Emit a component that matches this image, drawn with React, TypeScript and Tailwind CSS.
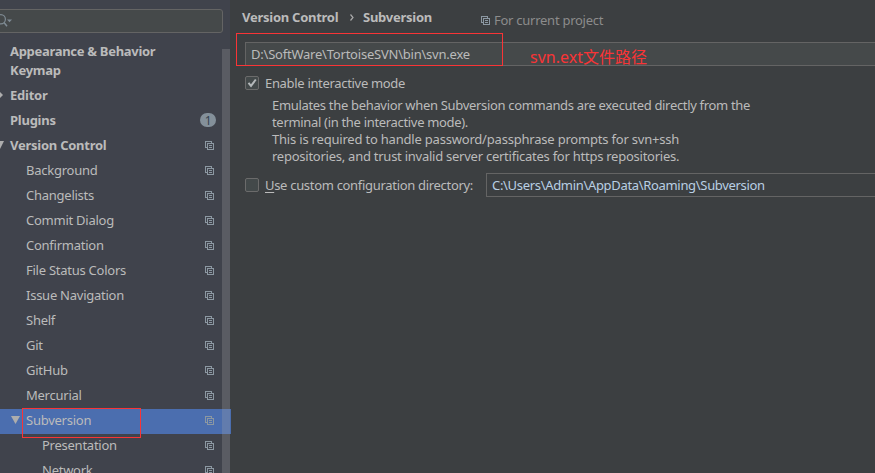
import React from "react";

function CopyIcon({ className = "" }: { className?: string }) {
  return (
    <svg width="9" height="9" viewBox="0 0 9 9" fill="none" stroke="#8c98a2" shapeRendering="crispEdges" className={`shrink-0 ${className}`}>
      <path d="M2 6.5H0.5V0.5H6.5V2" />
      <rect x="2.5" y="2.5" width="6" height="6" />
      <path d="M4 4.5H7M4 6.5H7" />
    </svg>
  );
}

const children = [
  "Background",
  "Changelists",
  "Commit Dialog",
  "Confirmation",
  "File Status Colors",
  "Issue Navigation",
  "Shelf",
  "Git",
  "GitHub",
  "Mercurial",
];

function Row({ label, indent = "pl-[26px]" }: { label: string; indent?: string }) {
  return (
    <div className={`flex h-[25px] shrink-0 items-start pr-[16px] ${indent}`}>
      <span className="mt-[3px] flex-1">{label}</span>
      <CopyIcon className="mt-[7px]" />
    </div>
  );
}

function Sidebar() {
  return (
    <aside className="relative z-10 flex h-full w-[230px] shrink-0 flex-col bg-[#40434c] tracking-[-0.25px]">
      <div className="-ml-[6px] mt-[9px] flex h-[24px] w-[229px] shrink-0 items-center rounded-[3px] border border-[#646464] bg-[#45494a]">
        <svg width="20" height="14" viewBox="0 0 20 14" fill="none" className="ml-px">
          <circle cx="4.8" cy="5.3" r="4.6" stroke="#7f8b94" strokeWidth="1.2" />
          <path d="M8 8.6L11 12.2" stroke="#7f8b94" strokeWidth="1.5" />
          <path d="M11 5.5H16L13.5 8.3Z" fill="#7f8b94" />
        </svg>
      </div>
      <nav className="flex min-h-0 flex-1 flex-col pt-[8px]">
        <div className="flex h-[20px] shrink-0 items-center pl-[10px] font-bold tracking-[-0.3px]">Appearance &amp; Behavior</div>
        <div className="flex h-[23px] shrink-0 items-start pl-[10px] pt-px font-bold">Keymap</div>
        <div className="relative flex h-[25px] shrink-0 items-start pl-[10px] pt-[3px] font-bold">
          <svg width="3" height="6" viewBox="0 0 3 6" className="absolute left-0 top-[8px]"><path d="M0 0L3 3L0 6Z" fill="#adadad" /></svg>
          Editor
        </div>
        <div className="flex h-[25px] shrink-0 items-start pl-[10px] pr-[14px] font-bold">
          <span className="mt-[3px] flex-1">Plugins</span>
          <span className="mt-[4px] flex h-[14px] w-4 items-center justify-center rounded-[7px] bg-[#84909a] text-[12px] font-normal text-[#35424f]">1</span>
        </div>
        <div className="relative flex h-[25px] shrink-0 items-start pl-[10px] pr-[16px] font-bold">
          <svg width="4" height="8" viewBox="0 0 4 8" className="absolute left-0 top-[7px]"><path d="M0 0H4L0 8Z" fill="#adadad" /></svg>
          <span className="mt-[3px] flex-1">Version Control</span>
          <CopyIcon className="mt-[7px]" />
        </div>
        {children.map((label) => <Row key={label} label={label} />)}
        <div className="relative flex h-[25px] w-[231px] shrink-0 items-start bg-[#4b6eaf] pl-[11px] pr-[17px]">
          <svg width="9" height="8" viewBox="0 0 9 8" className="mt-[7px]"><path d="M0 0H9L4.5 8Z" fill="#adadad" /></svg>
          <span className="ml-[6px] mt-[3px] flex-1">Subversion</span>
          <CopyIcon className="mt-[7px]" />
          <div className="absolute -top-px left-[22px] h-[30px] w-[119px] border border-[#f93436]" />
        </div>
        <Row label="Presentation" indent="pl-[42px]" />
        <Row label="Network" indent="pl-[42px]" />
      </nav>
      <div className="absolute bottom-0 right-0 top-[49px] w-2 bg-[#a6a6a6]/25" />
    </aside>
  );
}

function Checkbox({ checked = false }: { checked?: boolean }) {
  return (
    <span className="flex size-[14px] shrink-0 items-center justify-center rounded-[2px] border border-[#6b6b6b] bg-[#43494a]">
      {checked && (
        <svg width="12" height="12" viewBox="0 0 12 12" fill="none"><path d="M2.5 5.8L5 8.8L9.8 2.5" stroke="#b4b8ba" strokeWidth="2" /></svg>
      )}
    </span>
  );
}

export default function App() {
  return (
    <div className="flex h-[473px] w-[875px] overflow-hidden bg-[#3c3f41] font-['Noto_Sans','Noto_Sans_CJK_SC',sans-serif] text-[13px] leading-[17px] whitespace-nowrap text-[#bbbbbb]">
      <Sidebar />
      <main className="flex min-w-0 flex-1 flex-col pl-[15px] tracking-[-0.32px]">
        <header className="-ml-[3px] flex h-[42px] shrink-0 items-start pt-[9px] font-bold tracking-[-0.26px]">
          <span className="w-[98px]">Version Control</span>
          <svg width="4" height="7" viewBox="0 0 4 7" fill="none" className="ml-[10px] mr-[9px] mt-[5px]"><path d="M0.5 0.5L3 3.5L0.5 6.5" stroke="#aaa" strokeWidth="1.2" /></svg>
          <span className="w-[118px]">Subversion</span>
          <CopyIcon className="mt-[7px]" />
          <span className="ml-[4px] mt-[3px] font-normal text-[#8c8c8c]">For current project</span>
        </header>
        <div className="relative flex h-[24px] shrink-0 items-center border border-r-0 border-[#646464] bg-[#45494a] pl-[5px]">
          <span className="tracking-[-0.22px]">D:\SoftWare\TortoiseSVN\bin\svn.exe</span>
          <div className="absolute -left-[10px] -top-[10px] h-[33px] w-[267px] border border-[#f93436]" />
          <div className="absolute left-[284px] top-[4px] text-[16px] leading-[20px] tracking-normal text-[#f93436]">svn.ext文件路径</div>
        </div>
        <label className="mt-[10px] flex h-[14px] shrink-0 items-center">
          <Checkbox checked />
          <span className="ml-[6px]">Enable interactive mode</span>
        </label>
        <div className="ml-[27px] mt-[7px] flex flex-col">
          <span>Emulates the behavior when Subversion commands are executed directly from the</span>
          <span>terminal (in the interactive mode).</span>
          <span className="tracking-[-0.2px]">This is required to handle password/passphrase prompts for svn+ssh</span>
          <span className="tracking-[-0.25px]">repositories, and trust invalid server certificates for https repositories.</span>
        </div>
        <div className="mt-[8px] flex h-[24px] shrink-0 items-center">
          <Checkbox />
          <span className="ml-[6px] w-[221px] tracking-[-0.31px]"><span className="underline underline-offset-2">U</span>se custom configuration directory:</span>
          <div className="flex h-[24px] flex-1 items-center border border-r-0 border-[#646464] pl-[5px] text-[#b9cfe4]">C:\Users\Admin\AppData\Roaming\Subversion</div>
        </div>
      </main>
    </div>
  );
}
